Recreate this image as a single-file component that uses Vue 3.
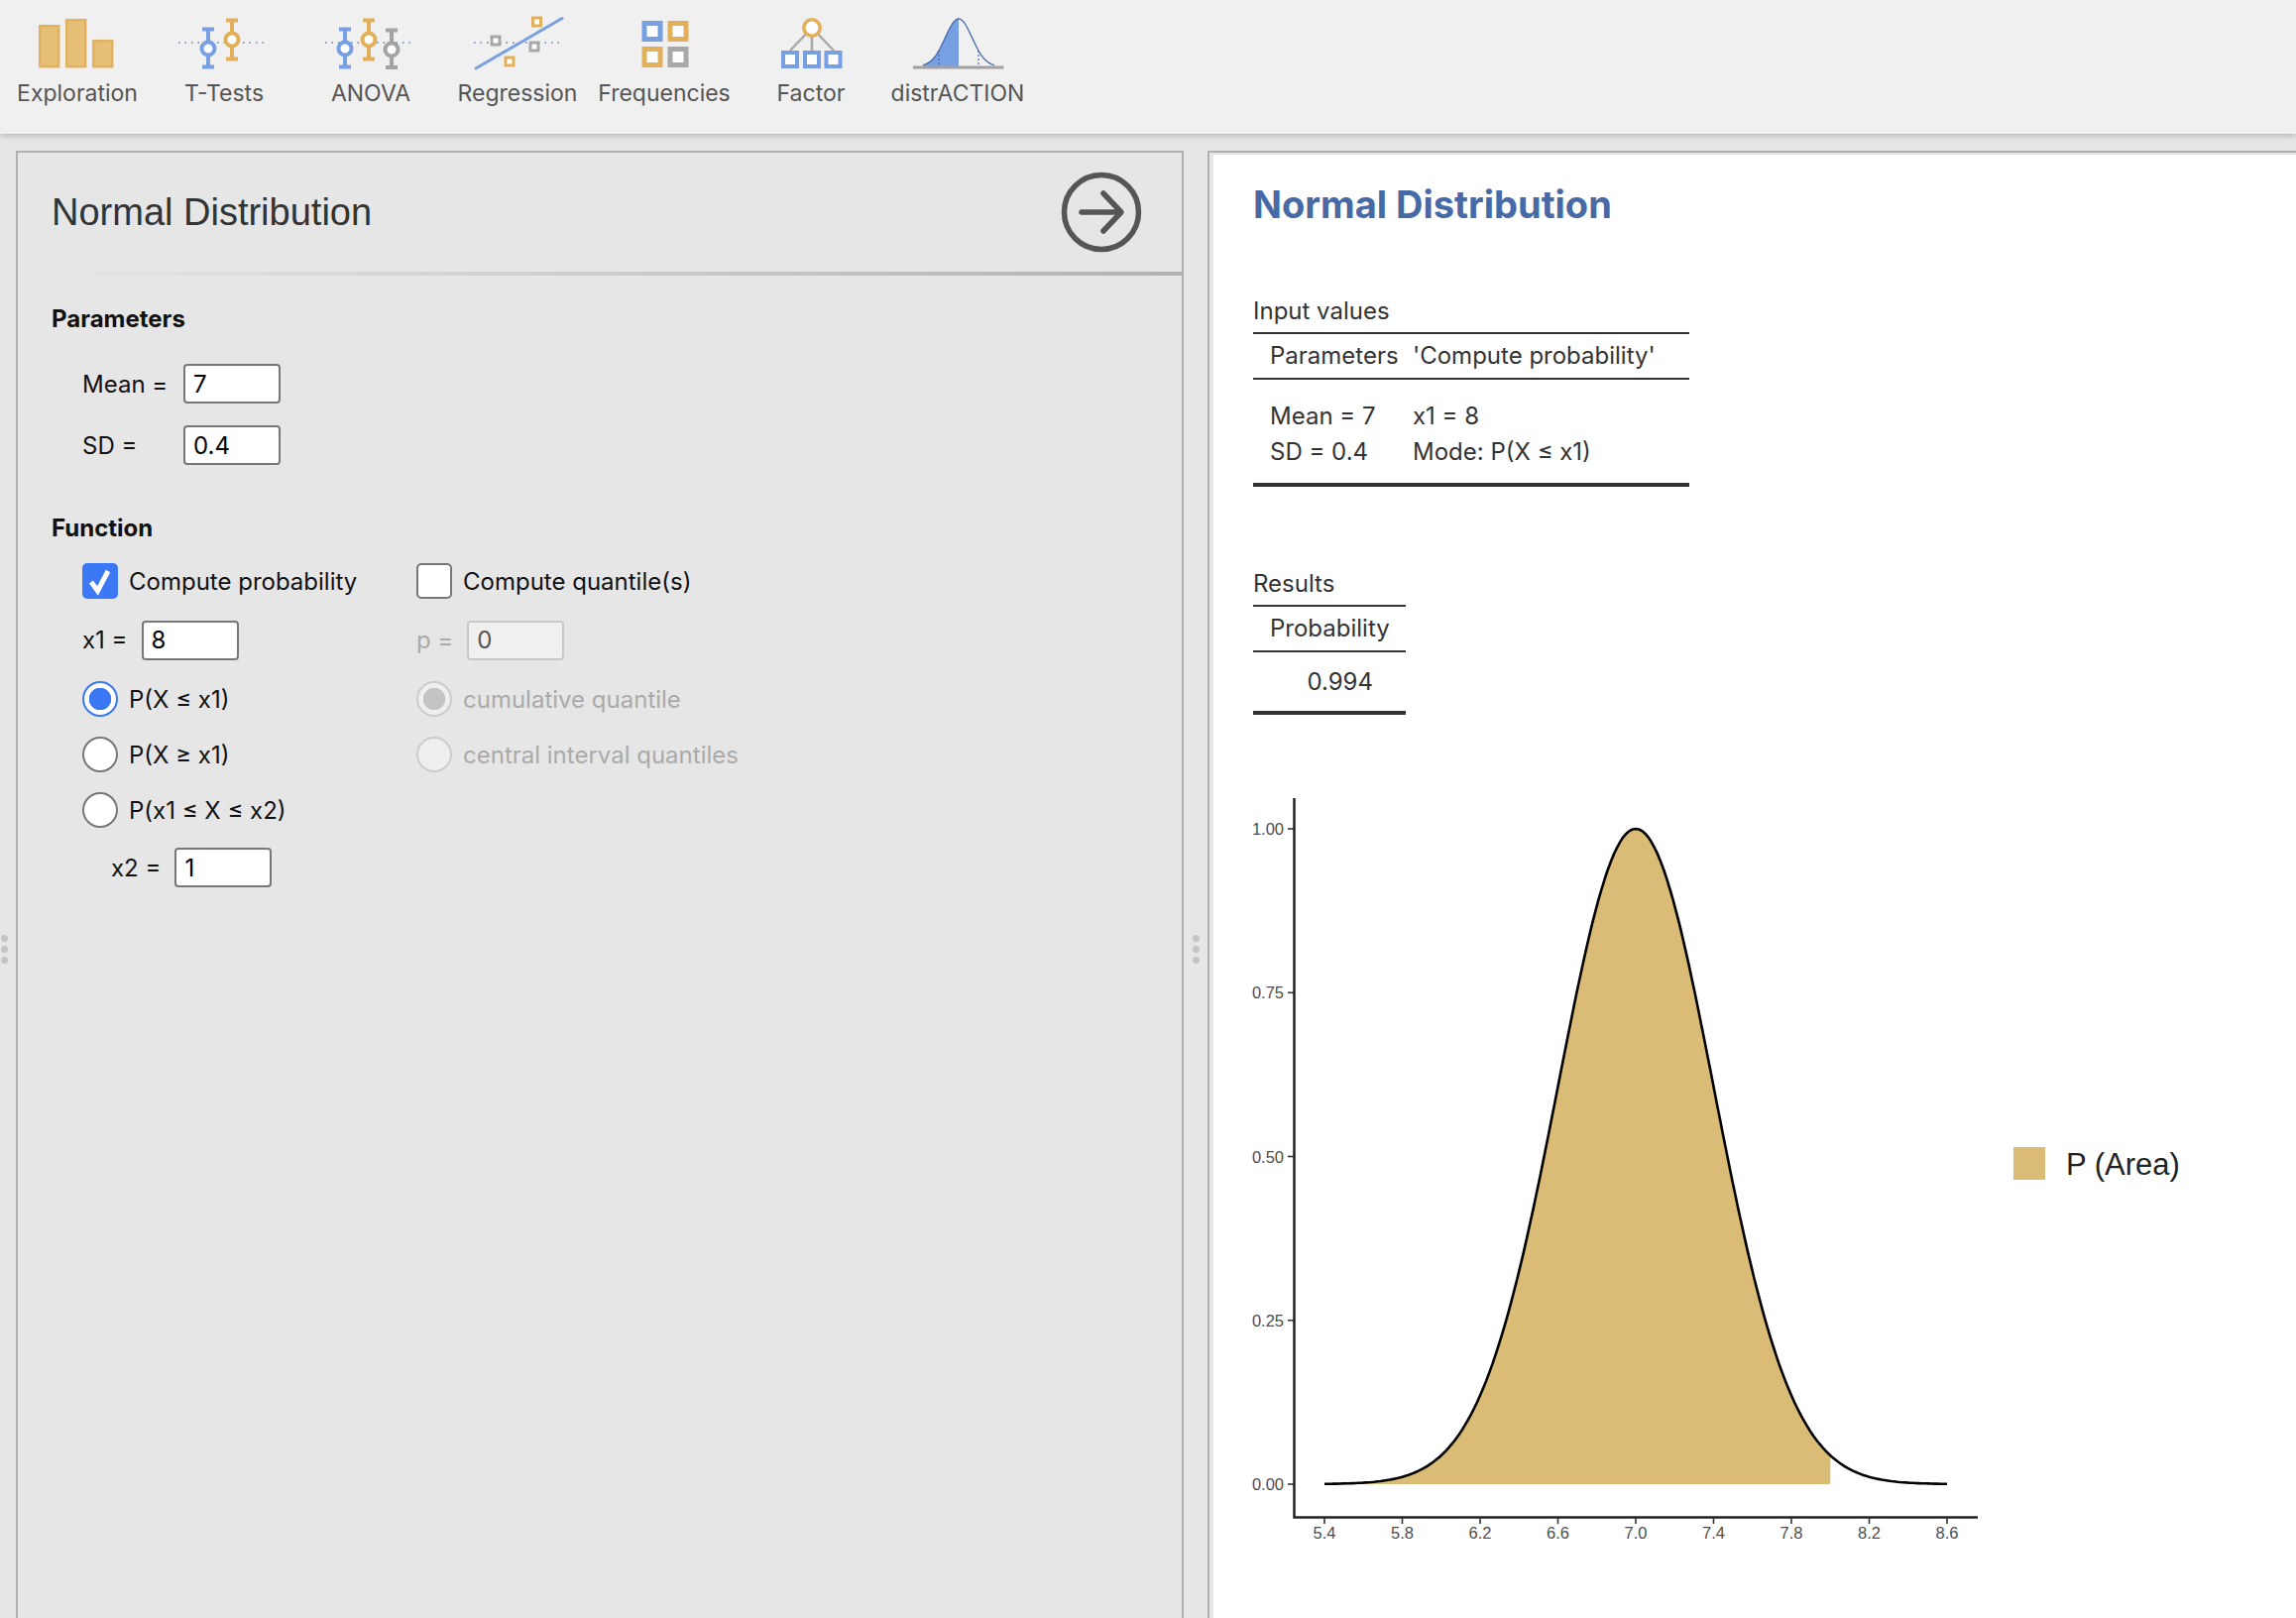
<script setup>
const items = ['Exploration','T-Tests','ANOVA','Regression','Frequencies','Factor','distrACTION']
const mx = x => 1376 + (x - 5.4) * 196.25
const my = v => 1487 - v * 661
const pdf = x => Math.exp(-((x - 7) ** 2) / (2 * 0.16))
function curve(a, b, n) {
  const pts = []
  for (let i = 0; i <= n; i++) {
    const x = a + (b - a) * i / n
    pts.push(mx(x).toFixed(1) + ' ' + my(pdf(x)).toFixed(1))
  }
  return pts
}
const fullLine = 'M' + curve(5.4, 8.6, 200).join(' L')
const area = 'M' + mx(5.4) + ' ' + my(0) + ' L' + curve(5.4, 8, 180).join(' L') + ' L' + mx(8) + ' ' + my(0) + ' Z'
const xticks = ['5.4','5.8','6.2','6.6','7.0','7.4','7.8','8.2','8.6'].map(t => ({ t, x: mx(parseFloat(t)) }))
const yticks = ['0.00','0.25','0.50','0.75','1.00'].map(t => ({ t, y: my(parseFloat(t)) }))

// toolbar distribution glyph
const gy = x => 67 - 48 * Math.exp(-((x - 967) ** 2) / (2 * 13.5 * 13.5))
function gpts(a, b) {
  const p = []
  for (let x = a; x <= b; x += 1) p.push(x + ' ' + gy(x).toFixed(1))
  return p
}
const glyphLeft = 'M931 67 L' + gpts(931, 967).join(' L') + ' L967 67 Z'
const glyphLine = 'M931 ' + gy(931).toFixed(1) + ' L' + gpts(931, 1003).join(' L')
const dash1 = gy(947).toFixed(1)
const dash2 = gy(987).toFixed(1)
</script>

<template>
  <div class="page">
    <header class="toolbar">
      <div class="tool">
        <svg class="ic" viewBox="4 10 148 65">
          <g fill="#e5bf75" stroke="#e1b160" stroke-width="2.5">
            <rect x="40.2" y="26.2" width="19" height="41"/>
            <rect x="67.2" y="20.2" width="19" height="47"/>
            <rect x="94.2" y="41.2" width="19" height="26"/>
          </g>
        </svg>
        <span>{{ items[0] }}</span>
      </div>
      <div class="tool">
        <svg class="ic" viewBox="152 10 148 65">
          <line x1="180" y1="43" x2="270" y2="43" class="dots"/>
          <g class="blue"><path d="M204 29.5H216M204 67.5H216M210 29.5V67.5"/><circle cx="210" cy="49" r="6.5"/></g>
          <g class="orange"><path d="M228 20.5H240M228 59.5H240M234 20.5V59.5"/><circle cx="234" cy="40" r="6.5"/></g>
        </svg>
        <span>{{ items[1] }}</span>
      </div>
      <div class="tool">
        <svg class="ic" viewBox="300 10 148 65">
          <line x1="328" y1="43" x2="418" y2="43" class="dots"/>
          <g class="blue"><path d="M342 29.5H354M342 67.5H354M348 29.5V67.5"/><circle cx="348" cy="49" r="6.5"/></g>
          <g class="orange"><path d="M366 20.5H378M366 59.5H378M372 20.5V59.5"/><circle cx="372" cy="40" r="6.5"/></g>
          <g class="gray"><path d="M389 30.5H401M389 68H401M395 30.5V68"/><circle cx="395" cy="50" r="6.5"/></g>
        </svg>
        <span>{{ items[2] }}</span>
      </div>
      <div class="tool">
        <svg class="ic" viewBox="448 10 148 65">
          <line x1="478" y1="43" x2="569" y2="43" class="dots"/>
          <line x1="480" y1="69" x2="567" y2="18.500" stroke="#7aa0e2" stroke-width="3" stroke-linecap="round"/>
          <g fill="#fff" stroke-width="3">
            <rect x="537.500" y="18" width="8" height="8" stroke="#e2b05a"/>
            <rect x="496" y="37" width="8" height="8" stroke="#a8a8a8"/>
            <rect x="535" y="43" width="8" height="8" stroke="#a8a8a8"/>
            <rect x="510" y="58" width="8" height="8" stroke="#e2b05a"/>
          </g>
        </svg>
        <span>{{ items[3] }}</span>
      </div>
      <div class="tool">
        <svg class="ic" viewBox="596 10 148 65">
          <g fill="#fff" stroke-width="5">
            <rect x="650" y="23.500" width="16" height="16" stroke="#76a0e2"/>
            <rect x="676" y="23.500" width="16" height="16" stroke="#e2b05a"/>
            <rect x="650" y="49.500" width="16" height="16" stroke="#e2b05a"/>
            <rect x="676" y="49.500" width="16" height="16" stroke="#a8a8a8"/>
          </g>
        </svg>
        <span>{{ items[4] }}</span>
      </div>
      <div class="tool">
        <svg class="ic" viewBox="744 10 148 65">
          <path d="M819 28L797 51M819 28V51M819 28L841 51" stroke="#a8a8a8" stroke-width="2.500" fill="none"/>
          <circle cx="819" cy="28" r="8.200" fill="#fff" stroke="#e2b05a" stroke-width="3.600"/>
          <g fill="#fff" stroke="#76a0e2" stroke-width="4">
            <rect x="790" y="53" width="14" height="14"/>
            <rect x="812" y="53" width="14" height="14"/>
            <rect x="833.500" y="53" width="14" height="14"/>
          </g>
        </svg>
        <span>{{ items[5] }}</span>
      </div>
      <div class="tool">
        <svg class="ic" viewBox="892 10 148 65">
          <path :d="glyphLeft" fill="#76a0e2"/>
          <path :d="glyphLine" fill="none" stroke="#4468a8" stroke-width="1.300"/>
          <line x1="947" :y1="dash1" x2="947" y2="67" stroke="#4468a8" stroke-width="1.200" stroke-dasharray="2 2"/>
          <line x1="987" :y1="dash2" x2="987" y2="67" stroke="#4468a8" stroke-width="1.200" stroke-dasharray="2 2"/>
          <line x1="921" y1="68" x2="1012.500" y2="68" stroke="#a0a0a0" stroke-width="3"/>
        </svg>
        <span>{{ items[6] }}</span>
      </div>
    </header>

    <main class="body">
      <div class="gutter gutter-left"><i></i><i></i><i></i></div>

      <section class="options">
        <div class="opt-head">
          <h2 class="opt-title">Normal Distribution</h2>
          <svg class="go" width="82" height="82" viewBox="0 0 82 82">
            <circle cx="41" cy="41" r="37.500" fill="none" stroke="#555" stroke-width="5.500"/>
            <path d="M21 41H60M43 22L61 41L43 60" fill="none" stroke="#555" stroke-width="5.500" stroke-linecap="round" stroke-linejoin="round"/>
          </svg>
        </div>
        <div class="opt-rule"></div>
        <div class="opt-body">
          <h3 class="sec sec-first">Parameters</h3>
          <div class="params">
            <label class="row"><span class="lab">Mean =</span><input class="num" value="7" readonly></label>
            <label class="row"><span class="lab">SD =</span><input class="num" value="0.4" readonly></label>
          </div>
          <h3 class="sec sec-second">Function</h3>
          <div class="fn">
            <div class="col col-a">
              <div class="row"><span class="check on"><svg width="36" height="36" viewBox="0 0 36 36"><path d="M9 19L15.500 28L26 8" fill="none" stroke="#fff" stroke-width="5"/></svg></span><span class="txt">Compute probability</span></div>
              <div class="row"><span class="lab-s">x1 =</span><input class="num" value="8" readonly></div>
              <div class="row"><span class="radio on"></span><span class="txt">P(X ≤ x1)</span></div>
              <div class="row"><span class="radio"></span><span class="txt">P(X ≥ x1)</span></div>
              <div class="row"><span class="radio"></span><span class="txt">P(x1 ≤ X ≤ x2)</span></div>
              <div class="row row-x2"><span class="lab-s">x2 =</span><input class="num" value="1" readonly></div>
            </div>
            <div class="col col-b">
              <div class="row"><span class="check"></span><span class="txt">Compute quantile(s)</span></div>
              <div class="row off"><span class="lab-s">p =</span><input class="num" value="0" readonly disabled></div>
              <div class="row off"><span class="radio on"></span><span class="txt">cumulative quantile</span></div>
              <div class="row off"><span class="radio"></span><span class="txt">central interval quantiles</span></div>
            </div>
          </div>
        </div>
      </section>

      <div class="gutter gutter-mid"><i></i><i></i><i></i></div>

      <section class="results">
        <div class="sheet">
          <h1 class="res-title">Normal Distribution</h1>
          <div class="tbl tbl-input">
            <div class="cap">Input values</div>
            <div class="tr head"><span class="c1">Parameters</span><span class="c2">'Compute probability'</span></div>
            <div class="tr first"><span class="c1">Mean = 7</span><span class="c2">x1 = 8</span></div>
            <div class="tr last"><span class="c1">SD = 0.4</span><span class="c2">Mode: P(X ≤ x1)</span></div>
          </div>
          <div class="tbl tbl-res">
            <div class="cap">Results</div>
            <div class="tr head"><span class="prob">Probability</span></div>
            <div class="tr single"><span class="val">0.994</span></div>
          </div>
          <svg class="plot" width="1040" height="800" viewBox="1264 780 1040 800">
            <path :d="area" fill="#dbbc76"/>
            <path :d="fullLine" fill="none" stroke="#000" stroke-width="2.600"/>
            <path d="M1345.500 795V1520.500H2035" fill="none" stroke="#222" stroke-width="2.500"/>
            <g v-for="t in xticks" :key="t.t">
              <line :x1="t.x" y1="1521" :x2="t.x" y2="1527" stroke="#333" stroke-width="1.600"/>
              <text :x="t.x" y="1542" class="tick" text-anchor="middle">{{ t.t }}</text>
            </g>
            <g v-for="t in yticks" :key="t.t">
              <line x1="1339" :y1="t.y" x2="1345" :y2="t.y" stroke="#333" stroke-width="1.600"/>
              <text x="1335" :y="t.y + 6" class="tick" text-anchor="end">{{ t.t }}</text>
            </g>
            <rect x="2071" y="1147" width="32" height="33" fill="#dbbc76"/>
            <text x="2124" y="1175" class="legend">P (Area)</text>
          </svg>
        </div>
      </section>
    </main>
  </div>
</template>

<style>
html, body { margin: 0; background: #e6e6e6; }
</style>

<style scoped>
.page {
  width: 2316px;
  height: 1632px;
  overflow: hidden;
  background: #e6e6e6;
  font-family: Inter, "Liberation Sans", sans-serif;
  color: #111;
  display: flex;
  flex-direction: column;
}
.toolbar {
  height: 135px;
  flex: none;
  box-sizing: border-box;
  padding-left: 4px;
  display: flex;
  background: #f0f0f0;
  box-shadow: 0 1px 7px rgba(0,0,0,.28);
  position: relative;
  z-index: 1;
}
.tool {
  width: 148px;
  display: flex;
  flex-direction: column;
  align-items: center;
  padding-top: 10px;
  color: #555;
  font-size: 23px;
  line-height: 28px;
}
.tool span { margin-top: 5px; white-space: nowrap; }
.ic { width: 148px; height: 65px; display: block; }
.dots { stroke: #5a7ab0; stroke-width: 1.300; stroke-dasharray: 1.500 5; }
.blue, .orange, .gray { fill: #fff; stroke-width: 4; }
.blue { stroke: #76a0e2; }
.orange { stroke: #e2b05a; }
.gray { stroke: #a3a3a3; }

.body {
  flex: 1;
  display: flex;
  padding-top: 17px;
  min-height: 0;
}
.gutter {
  flex: none;
  display: flex;
  flex-direction: column;
  align-items: center;
  gap: 4px;
  padding-top: 791px;
  box-sizing: border-box;
}
.gutter i { width: 7px; height: 7px; border-radius: 50%; background: #c4c4c4; display: block; }
.gutter-left { width: 16px; padding-right: 8px; }
.gutter-mid { width: 24px; }

.options {
  width: 1178px;
  flex: none;
  box-sizing: border-box;
  border: 2px solid #b0b0b0;
  border-bottom: none;
}
.opt-head {
  height: 120px;
  box-sizing: border-box;
  display: flex;
  align-items: center;
  justify-content: space-between;
  padding: 0 40px 0 34px;
}
.opt-title {
  margin: 0;
  font: 400 38px "Liberation Sans", sans-serif;
  color: #333;
}
.go { display: block; margin-bottom: -4px; margin-top: -4px; }
.opt-rule { height: 4px; background: linear-gradient(90deg, #e6e6e6 2%, #b2b2b2 100%); }
.opt-body { padding-left: 34px; }
.sec { margin: 0; font-size: 24px; font-weight: 700; line-height: 30px; color: #111; }
.sec-first { margin-top: 29px; }
.sec-second { margin-top: 49px; }
.params { margin-top: 30px; padding-left: 31px; display: flex; flex-direction: column; gap: 22px; }
.row { display: flex; align-items: center; font-size: 24px; white-space: nowrap; }
.lab { width: 102px; }
.lab-s { margin-right: 14px; }
.num {
  width: 98px;
  height: 40px;
  box-sizing: border-box;
  border: 2px solid #777;
  border-radius: 4px;
  background: #fff;
  padding: 0 0 0 8px;
  margin: 0;
  font: 400 24px Inter, "Liberation Sans", sans-serif;
  color: #000;
  outline: none;
}
.fn { margin-top: 20px; padding-left: 31px; display: flex; }
.col { display: grid; grid-template-rows: 36px 43px 36px 36px 36px 40px; row-gap: 20px; align-content: start; }
.col-a { width: 337px; flex: none; }
.row-x2 { padding-left: 29px; }
.check, .radio {
  width: 36px;
  height: 36px;
  flex: none;
  box-sizing: border-box;
  background: #fff;
  border: 2px solid #777;
  display: block;
}
.check { border-radius: 5px; }
.check.on { background: #3a78f5; border: none; }
.check svg { display: block; }
.radio { border-radius: 50%; }
.radio.on {
  border-color: #3a78f5;
  background: radial-gradient(circle, #3a78f5 0 11px, #fff 11.500px);
}
.txt { margin-left: 11px; }
.off { color: #aaa; }
.off .radio { background: #efefef; border-color: #ccc; }
.off .radio.on { background: radial-gradient(circle, #c4c4c4 0 11px, #efefef 11.500px); }
.off .num { background: #f0f0f0; border-color: #c8c8c8; color: #555; }

.results {
  flex: 1;
  min-width: 0;
  box-sizing: border-box;
  border: 2px solid #b0b0b0;
  border-width: 2px 0 0 2px;
  padding: 2px 0 0 4px;
}
.sheet { height: 100%; background: #fff; padding-left: 40px; box-sizing: border-box; }
.res-title {
  margin: 0;
  padding-top: 26px;
  font-size: 38px;
  line-height: 48px;
  font-weight: 700;
  color: #4769a5;
}
.tbl { font-size: 24px; color: #333; line-height: 30px; }
.cap { height: 36px; }
.tbl-input { width: 440px; margin-top: 69px; }
.tbl-res { width: 154px; margin-top: 83px; }
.tr { display: flex; box-sizing: border-box; }
.head { border-top: 2px solid #333; border-bottom: 2px solid #333; height: 48px; align-items: center; }
.first { margin-top: 18px; height: 38px; align-items: center; }
.last { height: 38px; align-items: center; border-bottom: 4px solid #333; height: 52px; padding-bottom: 14px; }
.c1 { width: 161px; padding-left: 17px; box-sizing: border-box; flex: none; }
.c2 { white-space: nowrap; }
.prob { padding-left: 17px; }
.single { height: 63px; border-bottom: 4px solid #333; align-items: center; justify-content: flex-end; padding-right: 33px; }
.plot { display: block; margin-left: -40px; margin-top: 69px; }
.tick { font: 16.500px "Liberation Sans", sans-serif; fill: #4d4d4d; }
.legend { font: 31px "Liberation Sans", sans-serif; fill: #222; }
</style>
